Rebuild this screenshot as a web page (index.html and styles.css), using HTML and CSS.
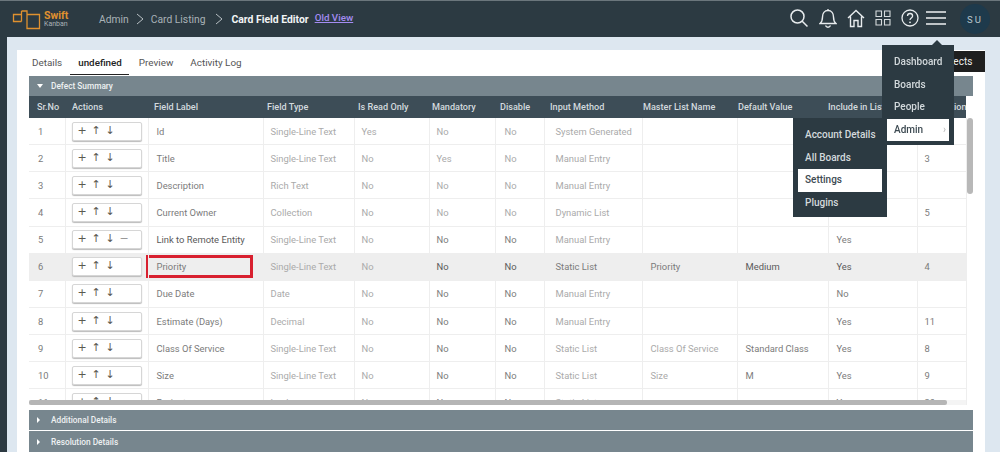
FILE: index.html
```html
<!DOCTYPE html>
<html lang="en">
<head>
<meta charset="utf-8">
<title>Card Field Editor</title>
<link rel="stylesheet" href="styles.css">
</head>
<body>
<header class="topbar">
  <div class="logo">
    <svg class="logo-mark" width="30" height="20" viewBox="0 0 30 20"><path d="M9.500 4.500H1.500V11.500H9.500M9.500 1H15V15M9.500 1V11.500M15 4.500H27.500V18.500H15V11" fill="none" stroke="#e0912f" stroke-width="1.300"/></svg>
    <div class="logo-text"><span class="logo-swift">Swift</span><span class="logo-kanban">Kanban</span></div>
  </div>
  <nav class="crumbs">
    <span class="crumb">Admin</span>
    <svg class="chev" width="8" height="12" viewBox="0 0 8 12"><path d="M1 1l6 5-6 5" fill="none" stroke="#b8c0c4" stroke-width="1"/></svg>
    <span class="crumb">Card Listing</span>
    <svg class="chev chev-two" width="8" height="12" viewBox="0 0 8 12"><path d="M1 1l6 5-6 5" fill="none" stroke="#b8c0c4" stroke-width="1"/></svg>
    <span class="crumb-current">Card Field Editor</span>
    <a class="old-view" href="#">Old View</a>
  </nav>
  <div class="tools">
    <svg class="tool" width="20" height="20" viewBox="0 0 20 20"><circle cx="8.500" cy="8.500" r="6.500" fill="none" stroke="#e8ecee" stroke-width="1.500"/><path d="M13.200 13.200L18.500 18.500" stroke="#e8ecee" stroke-width="1.500"/></svg>
    <svg class="tool" width="18" height="20" viewBox="0 0 18 20"><path d="M1 15.500c2-1.500 2.500-3 2.500-6.500S5.500 2.500 9 2.500 14.500 5.500 14.500 9s.5 5 2.500 6.500zM9 1v1.500M6.500 17.500c.5 1.200 1.300 1.700 2.500 1.700s2-.5 2.500-1.700" fill="none" stroke="#e8ecee" stroke-width="1.400"/></svg>
    <svg class="tool" width="18" height="20" viewBox="0 0 18 20"><path d="M1 10l8-7.500 8 7.500M3.500 8.500V18.500H7V12.500H11V18.500H14.500V8.500" fill="none" stroke="#e8ecee" stroke-width="1.400"/></svg>
    <svg class="tool" width="16" height="16" viewBox="0 0 16 16"><path d="M1 1h5.500v5.500H1zM9.500 1H15v5.500H9.500zM1 9.500h5.500V15H1zM9.500 9.500H15V15H9.500z" fill="none" stroke="#d5dadd" stroke-width="1.100"/></svg>
    <svg class="tool" width="18" height="18" viewBox="0 0 18 18"><circle cx="9" cy="9" r="8" fill="none" stroke="#e8ecee" stroke-width="1.300"/><path d="M6.500 7c0-1.500 1.100-2.500 2.600-2.500S11.600 5.500 11.600 7c0 2-2.600 2-2.600 4" fill="none" stroke="#e8ecee" stroke-width="1.300"/><circle cx="9" cy="13.300" r=".9" fill="#e8ecee"/></svg>
    <svg class="tool tool-menu" width="20" height="16" viewBox="0 0 20 16"><path d="M0 2h20M0 8h20M0 14h20" stroke="#eef1f2" stroke-width="1.700"/></svg>
    <span class="avatar">SU</span>
  </div>
</header>

<div class="shell">
  <div class="rail"></div>
  <main class="panel">
    <div class="tabs">
      <span class="tab">Details</span>
      <span class="tab tab-active">undefined</span>
      <span class="tab">Preview</span>
      <span class="tab">Activity Log</span>
      <span class="projects">Projects</span>
    </div>

    <div class="section"><i class="tri-down"></i>Defect Summary</div>

    <div class="grid-wrap">
      <table class="grid">
        <colgroup>
          <col class="c1"><col class="c2"><col class="c3"><col class="c4"><col class="c5"><col class="c6"><col class="c7"><col class="c8"><col class="c9"><col class="c10"><col class="c11"><col class="c12">
        </colgroup>
        <thead>
          <tr><th>Sr.No</th><th>Actions</th><th>Field Label</th><th>Field Type</th><th>Is Read Only</th><th>Mandatory</th><th>Disable</th><th>Input Method</th><th>Master List Name</th><th>Default Value</th><th>Include in List</th><th>Position</th></tr>
        </thead>
        <tbody>
          <tr><td class="m">1</td><td><span class="acts"><b>+</b><b>↑</b><b>↓</b></span></td><td class="m">Id</td><td>Single-Line Text</td><td>Yes</td><td>No</td><td>No</td><td>System Generated</td><td></td><td></td><td></td><td class="m"></td></tr>
          <tr><td class="m">2</td><td><span class="acts"><b>+</b><b>↑</b><b>↓</b></span></td><td class="m">Title</td><td>Single-Line Text</td><td>No</td><td>Yes</td><td>No</td><td>Manual Entry</td><td></td><td></td><td></td><td class="m">3</td></tr>
          <tr><td class="m">3</td><td><span class="acts"><b>+</b><b>↑</b><b>↓</b></span></td><td class="m">Description</td><td>Rich Text</td><td>No</td><td>No</td><td>No</td><td>Manual Entry</td><td></td><td></td><td></td><td class="m"></td></tr>
          <tr><td class="m">4</td><td><span class="acts"><b>+</b><b>↑</b><b>↓</b></span></td><td class="m">Current Owner</td><td>Collection</td><td>No</td><td>No</td><td>No</td><td>Dynamic List</td><td></td><td></td><td></td><td class="m">5</td></tr>
          <tr><td class="m">5</td><td><span class="acts"><b>+</b><b>↑</b><b>↓</b><b class="minus">−</b></span></td><td class="d">Link to Remote Entity</td><td>Single-Line Text</td><td>No</td><td class="m">No</td><td class="m">No</td><td>Manual Entry</td><td></td><td></td><td class="m">Yes</td><td class="m"></td></tr>
          <tr class="selected"><td class="m">6</td><td><span class="acts"><b>+</b><b>↑</b><b>↓</b></span></td><td class="m mark-cell"><span class="marked">Priority</span></td><td>Single-Line Text</td><td>No</td><td class="d">No</td><td class="d">No</td><td class="m">Static List</td><td class="m">Priority</td><td class="d">Medium</td><td class="d">Yes</td><td class="m">4</td></tr>
          <tr><td class="m">7</td><td><span class="acts"><b>+</b><b>↑</b><b>↓</b></span></td><td class="m">Due Date</td><td>Date</td><td>No</td><td class="m">No</td><td class="m">No</td><td>Manual Entry</td><td></td><td></td><td class="m">No</td><td class="m"></td></tr>
          <tr><td class="m">8</td><td><span class="acts"><b>+</b><b>↑</b><b>↓</b></span></td><td class="m">Estimate (Days)</td><td>Decimal</td><td>No</td><td class="m">No</td><td class="m">No</td><td>Manual Entry</td><td></td><td></td><td class="m">Yes</td><td class="m">11</td></tr>
          <tr><td class="m">9</td><td><span class="acts"><b>+</b><b>↑</b><b>↓</b></span></td><td class="m">Class Of Service</td><td>Single-Line Text</td><td>No</td><td class="m">No</td><td class="m">No</td><td>Static List</td><td>Class Of Service</td><td class="m">Standard Class</td><td class="m">Yes</td><td class="m">8</td></tr>
          <tr><td class="m">10</td><td><span class="acts"><b>+</b><b>↑</b><b>↓</b></span></td><td class="m">Size</td><td>Single-Line Text</td><td>No</td><td class="m">No</td><td class="m">No</td><td>Static List</td><td>Size</td><td class="m">M</td><td class="m">Yes</td><td class="m">9</td></tr>
          <tr><td class="m">11</td><td><span class="acts"><b>+</b><b>↑</b><b>↓</b></span></td><td class="m">Project</td><td>Lookup</td><td>No</td><td class="m">No</td><td class="m">No</td><td>Static List</td><td></td><td></td><td class="m">Yes</td><td class="m">20</td></tr>
        </tbody>
      </table>
      <div class="vthumb"></div>
      <div class="htrack"><div class="hthumb"></div></div>
    </div>

    <div class="section section-after"><i class="tri-right"></i>Additional Details</div>
    <div class="section section-last"><i class="tri-right"></i>Resolution Details</div>
  </main>
</div>

<div class="menu menu-main">
  <span class="notch"></span>
  <div class="menu-item">Dashboard</div>
  <div class="menu-item">Boards</div>
  <div class="menu-item">People</div>
  <div class="menu-item menu-on">Admin<span class="caret">›</span></div>
</div>
<div class="menu menu-sub">
  <div class="menu-item">Account Details</div>
  <div class="menu-item">All Boards</div>
  <div class="menu-item menu-on">Settings</div>
  <div class="menu-item">Plugins</div>
</div>
</body>
</html>
```

FILE: styles.css
```css
html, body {
  margin: 0;
  height: 452px;
  overflow: hidden;
}
body {
  position: relative;
  background: #dde7f0;
  font-family: Roboto, "Liberation Sans", sans-serif;
  font-size: 9.5px;
  color: #666;
  filter: blur(0.45px);
}

/* top bar */
.topbar {
  height: 37px;
  box-sizing: border-box;
  border-top: 1px solid #6b767c;
  background: #2c3a42;
  display: flex;
  align-items: center;
}
.logo {
  display: flex;
  align-items: center;
  margin-left: 12px;
  width: 87px;
}
.logo-mark { flex: none; margin-top: 1px; }
.logo-text {
  display: flex;
  flex-direction: column;
  margin-left: 2px;
  line-height: 9px;
  margin-top: 2px;
}
.logo-swift { color: #e0912f; font-weight: 700; font-size: 10.5px; }
.logo-kanban { color: #aab2b6; font-size: 7px; }
.crumbs { display: flex; align-items: center; }
.crumb { color: #a9b2b7; font-size: 10.3px; }
.crumb-current { color: #f2f4f5; font-size: 10.4px; font-weight: 700; margin-left: 9px; }
.chev { margin: 0 7px 0 7px; }
.chev-two { margin-left: 9px; margin-right: 0; }
.old-view {
  color: #a48cf2;
  font-size: 9.8px;
  font-weight: 500;
  margin-left: 6px;
  margin-top: -4px;
}
.tools {
  margin-left: auto;
  display: flex;
  align-items: center;
  gap: 10px;
  padding-right: 10px;
}
.tool { flex: none; margin-top: -2px; }
.tool-menu { margin-left: -3px; }
.avatar {
  width: 30px;
  height: 30px;
  border-radius: 50%;
  background: #1e3a4c;
  color: #b9c6cd;
  font-size: 9.5px;
  letter-spacing: 2px;
  display: flex;
  align-items: center;
  justify-content: center;
  margin-left: 4px;
}

/* page */
.shell { display: flex; height: 415px; }
.rail { width: 7px; flex: none; background: #2c3a42; }
.panel {
  margin: 13px 15px 0 10px;
  flex: 1;
  background: #fff;
  padding: 0 12px;
  min-width: 0;
}

/* tabs */
.tabs {
  height: 26px;
  display: flex;
  align-items: center;
  font-size: 9.9px;
  color: #555;
  padding-left: 2px;
  margin-right: -12px;
}
.tab { padding: 0 7px; height: 22px; line-height: 22px; box-sizing: border-box; }
.tab:first-child { padding-left: 1px; margin-right: 1px; }
.tab:nth-child(3) { margin-right: 3px; }
.tab-active {
  color: #222;
  font-weight: 500;
  font-size: 9.8px;
  border-bottom: 1.5px solid #222;
  padding: 0 7px 0 8px;
  margin-right: 3px;
  line-height: 21px;
  height: 23px;
  margin-top: 1px;
}
.projects {
  margin-left: auto;
  width: 62px;
  height: 21px;
  box-sizing: border-box;
  background: #1f1f1f;
  color: #eee;
  font-size: 10px;
  line-height: 21px;
  text-align: center;
  align-self: flex-start;
  margin-top: 1px;
}

/* accordion bars */
.section {
  height: 20px;
  background: #77868e;
  color: #eef1f2;
  font-size: 8.3px;
  font-weight: 500;
  line-height: 20px;
  padding-left: 8px;
  display: flex;
  align-items: center;
}
.section-after { margin-top: 5px; }
.section-last { margin-top: 1px; height: 21px; }
.tri-down {
  width: 0; height: 0;
  border-left: 3px solid transparent;
  border-right: 3px solid transparent;
  border-top: 4px solid #fff;
  margin-right: 8px;
}
.tri-right {
  width: 0; height: 0;
  border-top: 3px solid transparent;
  border-bottom: 3px solid transparent;
  border-left: 3px solid #fff;
  margin-right: 11px;
}

/* grid */
.grid-wrap {
  position: relative;
  height: 309px;
  overflow: hidden;
}
.grid {
  border-collapse: collapse;
  table-layout: fixed;
  width: 937px;
}
.c1 { width: 36px; }
.c2 { width: 83px; }
.c3 { width: 115px; }
.c4 { width: 91px; }
.c5 { width: 75px; }
.c6 { width: 66px; }
.c7 { width: 49px; }
.c8 { width: 98px; }
.c9 { width: 95px; }
.c10 { width: 91px; }
.c11 { width: 89px; }
.c12 { width: 49px; }
.grid th {
  height: 22px;
  padding: 0 0 0 5px;
  background: #3d4d57;
  color: #d3dade;
  font-size: 9.1px;
  font-weight: 500;
  text-align: left;
  white-space: nowrap;
  overflow: hidden;
}
.grid th:nth-child(1) { padding-left: 8px; }
.grid th:nth-child(2) { padding-left: 7px; }
.grid th:nth-child(3) { padding-left: 6px; }
.grid th:nth-child(4) { padding-left: 4px; }
.grid th:nth-child(5) { padding-left: 4px; }
.grid th:nth-child(6) { padding-left: 3px; }
.grid th:nth-child(8) { padding-left: 6px; }
.grid th:nth-child(9) { padding-left: 1px; }
.grid th:nth-child(10) { padding-left: 1px; }
.grid th:nth-child(11) { padding-left: 0; }
.grid th:nth-child(12) { padding-left: 16px; }
.grid td {
  height: 26.15px;
  padding: 0 0 0 8px;
  border: 1px solid #eeeeee;
  border-top: 0;
  color: #aaa;
  font-size: 9.4px;
  white-space: nowrap;
  overflow: hidden;
}
.grid td:first-child { padding-left: 9px; border-left: 0; }
.grid td:nth-child(4) { padding-left: 7px; }
.grid td:nth-child(5) { padding-left: 7px; }
.grid td:nth-child(6) { padding-left: 7px; }
.grid td:nth-child(7) { padding-left: 9px; }
.grid td:nth-child(8) { padding-left: 11px; }
.grid td:nth-child(12) { padding-left: 7px; }
.grid td.m { color: #7b7b7b; }
.grid td.d { color: #5a5a5a; }
.grid td.mark-cell { overflow: visible; }
.selected td { background: #eeeeee; }
.marked {
  display: block;
  margin: 0 10px 0 -11px;
  padding-left: 8px;
  height: 17px;
  line-height: 18px;
  border: 3px solid #d8202f;
}
.acts {
  display: flex;
  box-sizing: border-box;
  width: 70px;
  height: 19px;
  margin-left: -2px;
  padding: 0 0 2px 5px;
  align-items: center;
  background: #fff;
  border: 1px solid #d6d6d6;
  border-radius: 2px;
  box-shadow: 0 1px 1px #bbb;
}
.acts b {
  width: 14px;
  font-weight: 400;
  font-size: 11px;
  color: #5a5a50;
  font-family: "DejaVu Sans", sans-serif;
}
.acts .minus { color: #999; }
.vthumb {
  position: absolute;
  right: 0;
  top: 22px;
  width: 6px;
  height: 76px;
  background: #b8b8b8;
  border-radius: 3px;
}
.htrack {
  position: absolute;
  left: 0;
  right: 7px;
  bottom: 0;
  height: 5px;
  background: #f4f4f4;
}
.hthumb {
  width: 918px;
  height: 5px;
  background: #b5b5b5;
  border-radius: 2px;
}

/* overlay menus */
.menu {
  position: absolute;
  background: #2c3a42;
  box-sizing: border-box;
  padding: 6px 5px 5px;
  font-size: 10px;
  font-weight: 500;
  color: #d3d9dc;
}
.menu-main { left: 882px; top: 45px; width: 72px; height: 100px; }
.menu-sub { left: 793px; top: 118px; width: 94px; height: 99px; }
.menu-item {
  height: 22.5px;
  line-height: 22.5px;
  padding-left: 7px;
  position: relative;
}
.menu-on { background: #fff; color: #3d4a52; }
.caret { position: absolute; right: 3px; color: #bbb; }
.notch {
  position: absolute;
  right: 12px;
  top: -5px;
  width: 0; height: 0;
  border-left: 5px solid transparent;
  border-right: 5px solid transparent;
  border-bottom: 5px solid #2c3a42;
}
```
